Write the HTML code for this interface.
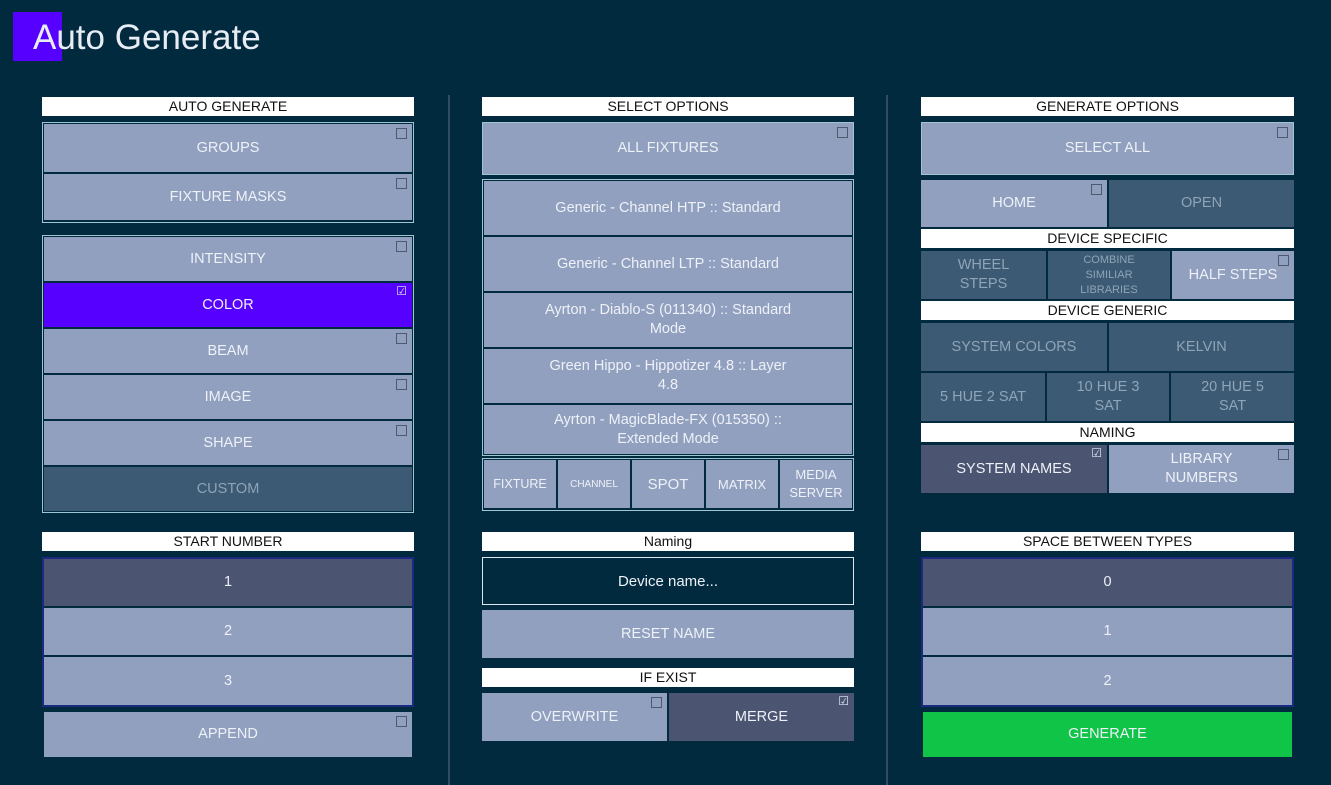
<!DOCTYPE html>
<html><head><meta charset="utf-8"><style>
*{box-sizing:border-box;margin:0;padding:0}
body{width:1331px;height:785px;background:#022a3f;position:relative;overflow:hidden;font-family:"Liberation Sans",sans-serif;color:#eef1f8}
div{position:absolute}
.h{background:#fff;color:#111;font-size:14px;text-align:center;line-height:19px;height:19px}
.b{background:#91a0bf;display:flex;align-items:center;justify-content:center;text-align:center;font-size:14.5px;line-height:19px}
.d{background:#3c5a73;color:#8ea4b8}
.s{background:#4b5470}
.p{background:#5600ff}
.g{background:#10c447}
.fr{border:1.5px solid #9fc4d2}
.fb{border:2px solid #1b2a80}
.c{position:absolute;right:5px;top:4px;width:11px;height:11px;border:1px solid #4c5a70}
.k{position:absolute;right:5px;top:2px;font-size:12px;color:#dfe6f5;line-height:12px}
.vl{width:2px;background:#2f4c62;top:95px;height:690px}
</style></head><body>
<div style="left:13px;top:12px;width:49px;height:49px;background:#5600ff"></div>
<div style="left:33px;top:16px;font-size:35px;color:#e8edf5;line-height:44px">Auto Generate</div>
<div class="vl" style="left:448px"></div>
<div class="vl" style="left:886px"></div>

<!-- col1 -->
<div class="h" style="left:42px;top:97px;width:372px">AUTO GENERATE</div>
<div class="fr" style="left:42px;top:122px;width:372px;height:101px;background:#022a3f"></div>
<div class="b" style="left:44px;top:124px;width:368px;height:48px">GROUPS<span class="c"></span></div>
<div class="b" style="left:44px;top:174px;width:368px;height:46px">FIXTURE MASKS<span class="c"></span></div>
<div class="fr" style="left:42px;top:235px;width:372px;height:278px;background:#022a3f"></div>
<div class="b" style="left:44px;top:237px;width:368px;height:44px">INTENSITY<span class="c"></span></div>
<div class="b p" style="left:44px;top:283px;width:368px;height:44px">COLOR<span class="k">☑</span></div>
<div class="b" style="left:44px;top:329px;width:368px;height:44px">BEAM<span class="c"></span></div>
<div class="b" style="left:44px;top:375px;width:368px;height:44px">IMAGE<span class="c"></span></div>
<div class="b" style="left:44px;top:421px;width:368px;height:44px">SHAPE<span class="c"></span></div>
<div class="b d" style="left:44px;top:467px;width:368px;height:44px">CUSTOM</div>
<div class="h" style="left:42px;top:532px;width:372px">START NUMBER</div>
<div class="fb" style="left:42px;top:557px;width:372px;height:150px"></div>
<div class="b s" style="left:44px;top:559px;width:368px;height:47px">1</div>
<div class="b" style="left:44px;top:608px;width:368px;height:47px">2</div>
<div class="b" style="left:44px;top:657px;width:368px;height:48px">3</div>
<div class="b" style="left:44px;top:712px;width:368px;height:45px">APPEND<span class="c"></span></div>

<!-- col2 -->
<div class="h" style="left:482px;top:97px;width:372px">SELECT OPTIONS</div>
<div class="b fr" style="left:482px;top:122px;width:372px;height:53px">ALL FIXTURES<span class="c"></span></div>
<div class="fr" style="left:482px;top:179px;width:372px;height:277px"></div>
<div class="b" style="left:484px;top:181px;width:368px;height:54px">Generic - Channel HTP :: Standard</div>
<div class="b" style="left:484px;top:237px;width:368px;height:54px">Generic - Channel LTP :: Standard</div>
<div class="b" style="left:484px;top:293px;width:368px;height:54px">Ayrton - Diablo-S (011340) :: Standard<br>Mode</div>
<div class="b" style="left:484px;top:349px;width:368px;height:54px">Green Hippo - Hippotizer 4.8 :: Layer<br>4.8</div>
<div class="b" style="left:484px;top:405px;width:368px;height:49px">Ayrton - MagicBlade-FX (015350) ::<br>Extended Mode</div>
<div class="fr" style="left:482px;top:458px;width:372px;height:53px"></div>
<div class="b" style="left:484px;top:460px;width:72px;height:48px;font-size:12.5px">FIXTURE</div>
<div class="b" style="left:558px;top:460px;width:72px;height:48px;font-size:10px">CHANNEL</div>
<div class="b" style="left:632px;top:460px;width:72px;height:48px;font-size:15px">SPOT</div>
<div class="b" style="left:706px;top:460px;width:72px;height:48px;font-size:13px">MATRIX</div>
<div class="b" style="left:780px;top:460px;width:72px;height:48px;font-size:13px;line-height:18px">MEDIA<br>SERVER</div>
<div class="h" style="left:482px;top:532px;width:372px">Naming</div>
<div class="b" style="left:482px;top:557px;width:372px;height:48px;background:#022a3f;border:1.5px solid #dde7ef;font-size:15px">Device name...</div>
<div class="b" style="left:482px;top:610px;width:372px;height:48px">RESET NAME</div>
<div class="h" style="left:482px;top:668px;width:372px">IF EXIST</div>
<div class="b" style="left:482px;top:693px;width:185px;height:48px">OVERWRITE<span class="c"></span></div>
<div class="b s" style="left:669px;top:693px;width:185px;height:48px">MERGE<span class="k">☑</span></div>

<!-- col3 -->
<div class="h" style="left:921px;top:97px;width:373px">GENERATE OPTIONS</div>
<div class="b fr" style="left:921px;top:122px;width:373px;height:53px">SELECT ALL<span class="c"></span></div>
<div class="b" style="left:921px;top:180px;width:186px;height:47px">HOME<span class="c"></span></div>
<div class="b d" style="left:1109px;top:180px;width:185px;height:47px">OPEN</div>
<div class="h" style="left:921px;top:229px;width:373px">DEVICE SPECIFIC</div>
<div class="b d" style="left:921px;top:251px;width:125px;height:48px">WHEEL<br>STEPS</div>
<div class="b d" style="left:1048px;top:251px;width:122px;height:48px;font-size:11px;line-height:15px">COMBINE<br>SIMILIAR<br>LIBRARIES</div>
<div class="b" style="left:1172px;top:251px;width:122px;height:48px">HALF STEPS<span class="c"></span></div>
<div class="h" style="left:921px;top:301px;width:373px">DEVICE GENERIC</div>
<div class="b d" style="left:921px;top:323px;width:186px;height:48px">SYSTEM COLORS</div>
<div class="b d" style="left:1109px;top:323px;width:185px;height:48px">KELVIN</div>
<div class="b d" style="left:921px;top:373px;width:124px;height:48px">5 HUE 2 SAT</div>
<div class="b d" style="left:1047px;top:373px;width:122px;height:48px">10 HUE 3<br>SAT</div>
<div class="b d" style="left:1171px;top:373px;width:123px;height:48px">20 HUE 5<br>SAT</div>
<div class="h" style="left:921px;top:423px;width:373px">NAMING</div>
<div class="b s" style="left:921px;top:445px;width:186px;height:48px">SYSTEM NAMES<span class="k">☑</span></div>
<div class="b" style="left:1109px;top:445px;width:185px;height:48px">LIBRARY<br>NUMBERS<span class="c"></span></div>
<div class="h" style="left:921px;top:532px;width:373px">SPACE BETWEEN TYPES</div>
<div class="fb" style="left:921px;top:557px;width:373px;height:150px"></div>
<div class="b s" style="left:923px;top:559px;width:369px;height:47px">0</div>
<div class="b" style="left:923px;top:608px;width:369px;height:47px">1</div>
<div class="b" style="left:923px;top:657px;width:369px;height:48px">2</div>
<div class="b g" style="left:923px;top:712px;width:369px;height:45px">GENERATE</div>
</body></html>
